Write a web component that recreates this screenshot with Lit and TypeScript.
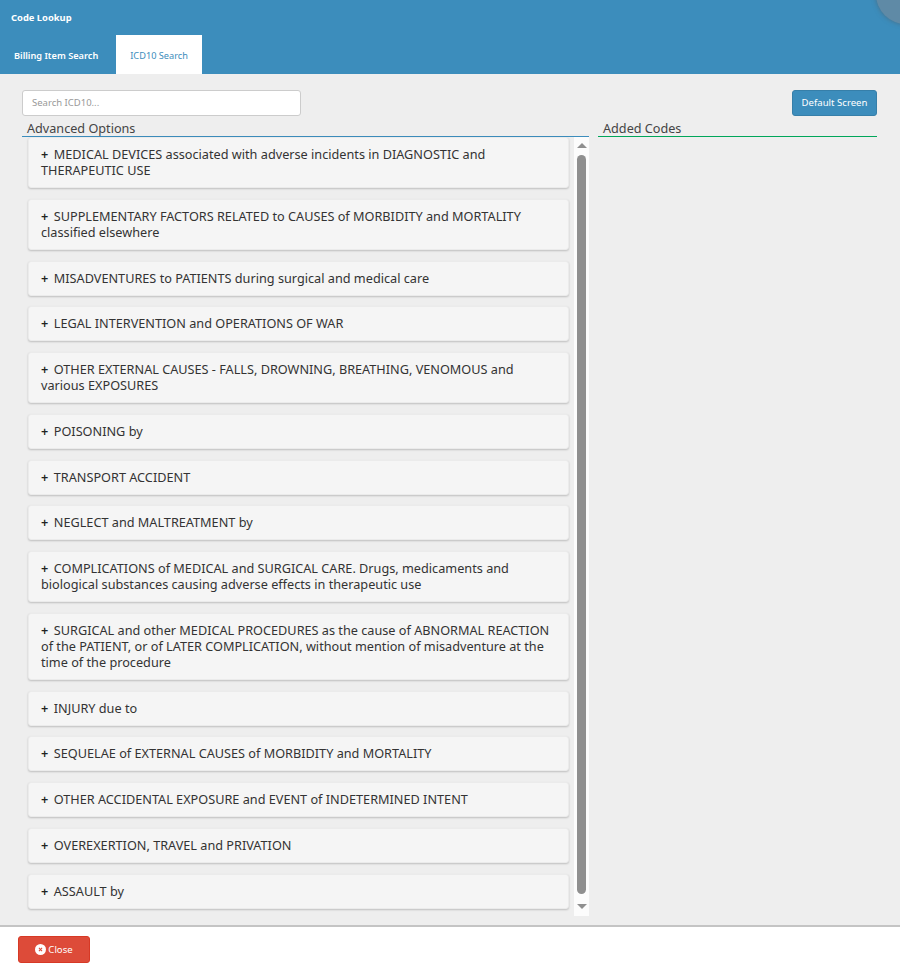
import { LitElement, html, css } from "lit";
import { customElement } from "lit/decorators.js";

const ITEMS = [
  "MEDICAL DEVICES associated with adverse incidents in DIAGNOSTIC and THERAPEUTIC USE",
  "SUPPLEMENTARY FACTORS RELATED to CAUSES of MORBIDITY and MORTALITY classified elsewhere",
  "MISADVENTURES to PATIENTS during surgical and medical care",
  "LEGAL INTERVENTION and OPERATIONS OF WAR",
  "OTHER EXTERNAL CAUSES - FALLS, DROWNING, BREATHING, VENOMOUS and various EXPOSURES",
  "POISONING by",
  "TRANSPORT ACCIDENT",
  "NEGLECT and MALTREATMENT by",
  "COMPLICATIONS of MEDICAL and SURGICAL CARE. Drugs, medicaments and biological substances causing adverse effects in therapeutic use",
  "SURGICAL and other MEDICAL PROCEDURES as the cause of ABNORMAL REACTION of the PATIENT, or of LATER COMPLICATION, without mention of misadventure at the time of the procedure",
  "INJURY due to",
  "SEQUELAE of EXTERNAL CAUSES of MORBIDITY and MORTALITY",
  "OTHER ACCIDENTAL EXPOSURE and EVENT of INDETERMINED INTENT",
  "OVEREXERTION, TRAVEL and PRIVATION",
  "ASSAULT by",
];

@customElement("app-root")
export class AppRoot extends LitElement {
  static styles = css`
    :host { display: flex; flex-direction: column; height: 972px; width: 900px; overflow: hidden; font-family: "Noto Sans", "Open Sans", sans-serif; color: #333; background: #fff; }
    .title { position: relative; height: 35px; background: #3c8dbc; color: #fff; font-size: 9.4px; font-weight: 700; line-height: 35px; padding-left: 11px; overflow: hidden; flex: none; }
    .blob { position: absolute; left: 876px; top: -36px; width: 60px; height: 60px; border-radius: 50%; background: #5f8aa6; box-shadow: 0 0 5px rgba(80,90,100,.6); }
    .tabs { display: flex; height: 39px; background: #3c8dbc; flex: none; }
    .tab { padding: 0 14px; font-size: 9.2px; line-height: 41px; color: #fff; font-weight: 600; }
    .tab.on { background: #fff; color: #3c8dbc; font-weight: 400; margin-left: 4px; }
    .body { flex: 1; min-height: 0; background: #eee; padding: 16px 23px 0 22px; display: flex; flex-direction: column; border-bottom: 2px solid #c4c4c4; }
    .top { display: flex; justify-content: space-between; height: 26px; flex: none; }
    .search { width: 279px; height: 26px; box-sizing: border-box; border: 1px solid #ccc; border-radius: 3px; background: #fff; font-size: 9.5px; line-height: 24px; color: #999; padding-left: 9px; }
    .btn { width: 85px; height: 26px; box-sizing: border-box; border: 1px solid #367fa9; border-radius: 3px; background: #3c8dbc; color: #fff; font-size: 9.6px; line-height: 24px; text-align: center; }
    .cols { display: flex; gap: 9px; flex: 1; min-height: 0; }
    .left { width: 567px; display: flex; flex-direction: column; }
    .right { width: 279px; }
    .head { height: 21px; box-sizing: border-box; font-size: 12.65px; line-height: 25px; padding-left: 5px; border-bottom: 1px solid #3c8dbc; color: #444; }
    .right .head { border-bottom-color: #00a65a; }
    .scroll { display: flex; height: 779px; padding-left: 6px; }
    .list { width: 541px; flex: none; }
    .item { box-sizing: border-box; background: #f5f5f5; border-radius: 3px; padding: 8px 12px 9px; margin-bottom: 10.75px; font-size: 12.7px; line-height: 16px; border: 1px solid #ebebeb; box-shadow: 0 1px 2px rgba(0,0,0,.2); color: #333; }
    .plus { color: #222; font-weight: 600; margin-right: 2.2px; }
    .bar { margin-left: 5px; width: 15px; background: #fcfcfc; display: flex; flex-direction: column; align-items: center; box-sizing: border-box; padding-top: 6px; }
    .thumb { width: 9px; height: 739px; margin: 7px 0 10px; background: #8f8f8f; border-radius: 5px; flex: none; }
    .up { width: 0; height: 0; border: 5px solid transparent; border-top: 0; border-bottom: 5px solid #8f8f8f; flex: none; }
    .down { width: 0; height: 0; border: 5px solid transparent; border-bottom: 0; border-top: 5px solid #8f8f8f; flex: none; }
    .foot { height: 45px; box-sizing: border-box; background: #fff; padding: 9px 18px 0; flex: none; }
    .close { display: flex; align-items: center; justify-content: center; gap: 2px; width: 72px; height: 27px; box-sizing: border-box; background: #dd4b39; border: 1px solid #d73925; border-radius: 3px; color: #fff; font-size: 9.6px; }
    .close svg { width: 11px; height: 11px; }
  `;

  render() {
    return html`
      <div class="title">Code Lookup<div class="blob"></div></div>
      <div class="tabs">
        <div class="tab">Billing Item Search</div>
        <div class="tab on">ICD10 Search</div>
      </div>
      <div class="body">
        <div class="top">
          <div class="search">Search ICD10...</div>
          <div class="btn">Default Screen</div>
        </div>
        <div class="cols">
          <div class="left">
            <div class="head">Advanced Options</div>
            <div class="scroll">
              <div class="list">
                ${ITEMS.map((t) => html`<div class="item"><span class="plus">+</span> ${t}</div>`)}
              </div>
              <div class="bar"><div class="up"></div><div class="thumb"></div><div class="down"></div></div>
            </div>
          </div>
          <div class="right"><div class="head">Added Codes</div></div>
        </div>
      </div>
      <div class="foot">
        <div class="close">
          <svg viewBox="0 0 12 12"><circle cx="6" cy="6" r="6" fill="#fff"/><path d="M4.3 4.3l3.4 3.4M7.7 4.3l-3.4 3.4" stroke="#dd4b39" stroke-width="1.2"/></svg>
          Close
        </div>
      </div>
    `;
  }
}
